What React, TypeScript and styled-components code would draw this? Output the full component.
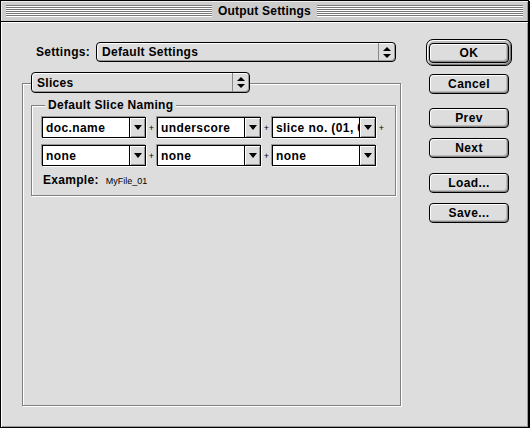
import styled, { createGlobalStyle } from "styled-components";

const GlobalStyle = createGlobalStyle`
  html, body {
    margin: 0;
    padding: 0;
    background: #ffffff;
  }
  body {
    font-family: "Liberation Sans", Arial, sans-serif;
    font-size: 12px;
    color: #000;
  }
`;

const Window = styled.div`
  width: 527px;
  height: 426px;
  border: 1px solid #000;
  box-shadow: 1px 1px 0 #000;
  display: flex;
  flex-direction: column;
  background: #dddddd;
  overflow: hidden;
`;

const TitleBar = styled.div`
  height: 20px;
  display: flex;
  align-items: center;
  gap: 4px;
  padding: 0 5px;
  background: #cccccc;
  border-bottom: 1px solid #000;
  box-shadow: inset 1px 1px 0 #eeeeee, inset -1px 0 0 #999999;
`;

const Stripes = styled.div`
  flex: 1;
  height: 12px;
  background: repeating-linear-gradient(
    to bottom,
    #777777 0 1px,
    #ffffff 1px 2px
  );
`;

const Title = styled.span`
  font-weight: bold;
  font-size: 12px;
  padding: 0 2px;
  letter-spacing: 0.2px;
`;

const Body = styled.div`
  flex: 1;
  display: flex;
  box-shadow: inset 1px 1px 0 #ffffff, inset -1px -1px 0 #999999;
`;

const Main = styled.div`
  padding: 20px 0 0 21px;
  display: flex;
  flex-direction: column;
`;

const SettingsRow = styled.div`
  display: flex;
  align-items: center;
  gap: 6px;
  padding-left: 14px;
`;

const Label = styled.span`
  font-weight: bold;
  font-size: 12px;
  letter-spacing: 0.3px;
`;

const Popup = styled.div<{ $width: number; $height: number }>`
  width: ${(p) => p.$width}px;
  height: ${(p) => p.$height}px;
  box-sizing: border-box;
  border: 1px solid #000;
  border-radius: 4px;
  background: #dddddd;
  box-shadow: inset 1px 1px 0 #ffffff, inset -1px -1px 0 #999999;
  display: flex;
  align-items: stretch;
  font-weight: bold;
  font-size: 12px;
`;

const PopupText = styled.span`
  flex: 1;
  display: flex;
  align-items: center;
  padding-left: 5px;
  letter-spacing: 0.3px;
`;

const PopupArrow = styled.span`
  width: 16px;
  border-left: 1px solid #888888;
  display: flex;
  align-items: center;
  justify-content: center;
`;

const GroupOuter = styled.div`
  position: relative;
  margin-top: 21px;
  width: 379px;
  height: 323px;
  box-sizing: border-box;
  border: 1px solid #808080;
  box-shadow: 1px 1px 0 #ffffff, inset 1px 1px 0 #ffffff;
  padding: 21px 0 0 8px;
`;

const GroupPopup = styled.div`
  position: absolute;
  left: 8px;
  top: -12px;
`;

const Group = styled.div`
  position: relative;
  width: 365px;
  height: 91px;
  box-sizing: border-box;
  border: 1px solid #808080;
  box-shadow: 1px 1px 0 #ffffff, inset 1px 1px 0 #ffffff;
  padding: 11px 0 0 10px;
  display: flex;
  flex-direction: column;
  gap: 7px;
`;

const GroupTitle = styled.span`
  position: absolute;
  left: 13px;
  top: -8px;
  padding: 0 3px;
  background: #dddddd;
  font-weight: bold;
  font-size: 12px;
  letter-spacing: 0.3px;
`;

const FieldRow = styled.div`
  display: flex;
  align-items: center;
`;

const Field = styled.div`
  width: 104px;
  height: 21px;
  box-sizing: border-box;
  border: 1px solid #000;
  background: #ffffff;
  box-shadow: -1px -1px 0 #999999, 1px 1px 0 #ffffff;
  display: flex;
`;

const FieldText = styled.span`
  flex: 1;
  min-width: 0;
  display: flex;
  align-items: center;
  padding-left: 3px;
  font-weight: bold;
  font-size: 12px;
  letter-spacing: 0.4px;
  white-space: nowrap;
  overflow: hidden;
`;

const FieldArrow = styled.span`
  width: 15px;
  flex: none;
  border-left: 1px solid #000;
  background: #dddddd;
  box-shadow: inset 1px 1px 0 #ffffff, inset -1px -1px 0 #999999;
  display: flex;
  align-items: center;
  justify-content: center;
`;

const Plus = styled.span`
  width: 11px;
  text-align: center;
  font-size: 9px;
`;

const ExampleRow = styled.div`
  display: flex;
  align-items: baseline;
  gap: 7px;
  padding-left: 1px;
`;

const ExampleValue = styled.span`
  font-size: 9px;
`;

const Side = styled.div`
  margin-left: 25px;
  padding-top: 17px;
  width: 86px;
  display: flex;
  flex-direction: column;
  align-items: center;
`;

const DefaultRing = styled.div`
  width: 86px;
  height: 27px;
  box-sizing: border-box;
  border: 1px solid #000;
  border-radius: 7px;
  background: #bbbbbb;
  box-shadow: inset 1px 1px 0 #ffffff, inset -1px -1px 0 #777777;
  display: flex;
  align-items: center;
  justify-content: center;
`;

const Button = styled.button<{ $top?: number }>`
  width: 80px;
  height: 20px;
  margin-top: ${(p) => p.$top ?? 0}px;
  box-sizing: border-box;
  border: 1px solid #000;
  border-radius: 4px;
  background: #dddddd;
  box-shadow: inset 1px 1px 0 #ffffff, inset -1px -1px 0 #888888,
    inset -2px -2px 0 #bbbbbb;
  font-family: "Liberation Sans", Arial, sans-serif;
  font-weight: bold;
  font-size: 12px;
  letter-spacing: 0.4px;
  color: #000;
  padding: 0;
  cursor: pointer;
`;

function UpDown() {
  return (
    <svg width="8" height="11" viewBox="0 0 8 11">
      <path d="M4 0 L8 4 L0 4 Z M0 7 L8 7 L4 11 Z" fill="#000" />
    </svg>
  );
}

function Down() {
  return (
    <svg width="8" height="5" viewBox="0 0 8 5">
      <path d="M0 0 L8 0 L4 5 Z" fill="#000" />
    </svg>
  );
}

function Combo({ value }: { value: string }) {
  return (
    <Field>
      <FieldText>{value}</FieldText>
      <FieldArrow>
        <Down />
      </FieldArrow>
    </Field>
  );
}

const rows = [
  ["doc.name", "underscore", "slice no. (01, 02...)"],
  ["none", "none", "none"],
];

export default function App() {
  return (
    <>
      <GlobalStyle />
      <Window>
        <TitleBar>
          <Stripes />
          <Title>Output Settings</Title>
          <Stripes />
        </TitleBar>
        <Body>
          <Main>
            <SettingsRow>
              <Label>Settings:</Label>
              <Popup $width={300} $height={20}>
                <PopupText>Default Settings</PopupText>
                <PopupArrow>
                  <UpDown />
                </PopupArrow>
              </Popup>
            </SettingsRow>
            <GroupOuter>
              <GroupPopup>
                <Popup $width={219} $height={21}>
                  <PopupText>Slices</PopupText>
                  <PopupArrow>
                    <UpDown />
                  </PopupArrow>
                </Popup>
              </GroupPopup>
              <Group>
                <GroupTitle>Default Slice Naming</GroupTitle>
                {rows.map((row, r) => (
                  <FieldRow key={r}>
                    {row.map((v, i) => (
                      <FieldRow key={i}>
                        <Combo value={v} />
                        {(r === 0 || i < 2) && <Plus>+</Plus>}
                      </FieldRow>
                    ))}
                  </FieldRow>
                ))}
                <ExampleRow>
                  <Label>Example:</Label>
                  <ExampleValue>MyFile_01</ExampleValue>
                </ExampleRow>
              </Group>
            </GroupOuter>
          </Main>
          <Side>
            <DefaultRing>
              <Button>OK</Button>
            </DefaultRing>
            <Button $top={8}>Cancel</Button>
            <Button $top={14}>Prev</Button>
            <Button $top={10}>Next</Button>
            <Button $top={15}>Load...</Button>
            <Button $top={10}>Save...</Button>
          </Side>
        </Body>
      </Window>
    </>
  );
}
